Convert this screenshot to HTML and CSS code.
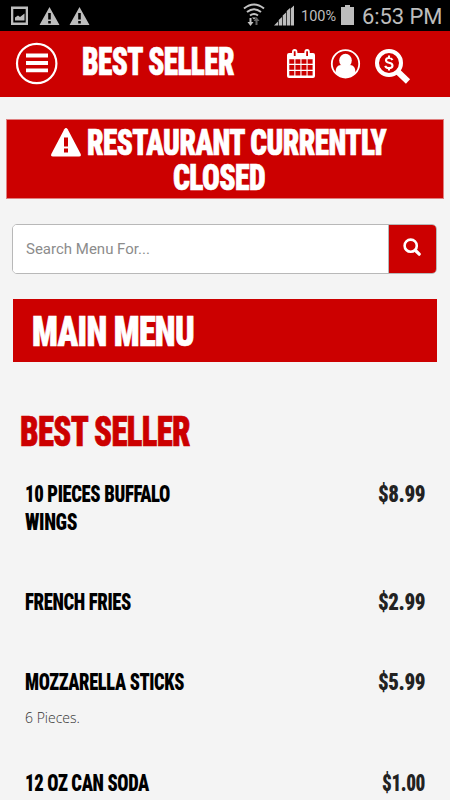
FILE: index.html
```html
<!DOCTYPE html>
<html lang="en">
<head>
    <meta charset="UTF-8">
    <meta name="viewport" content="width=device-width, initial-scale=1.0">
    <title>Best Seller</title>
    <link rel="stylesheet" href="styles.css">
</head>
<body>
    <!--status bar-->
    <div class="status">
        <svg class="notices" width="90" height="31" viewBox="0 0 90 31">
            <path fill="#bdbdbd" fill-rule="evenodd" d="M11 6.500h17v18.500H11zM13.300 9v13.500h12.400V9z"/>
            <path fill="#bdbdbd" d="M15 20.500v-3l3-2 2 1.500 4.500-3.500v7z"/>
            <path fill="#bdbdbd" d="M49.500 7l10 18h-20zM79.500 7l10 18h-20z"/>
            <path stroke="#000" stroke-width="2.600" d="M49.500 13v6.500m0 1.500v2.500M79.500 13v6.500m0 1.500v2.500"/>
        </svg>
        <svg class="signal" width="55" height="31" viewBox="0 0 55 31">
            <g fill="none" stroke="#c4c4c4" stroke-width="2">
                <path d="M1 8.500q10-8 20 0M4 12q7-5.500 14 0M7 15.500q4-3 8 0"/>
            </g>
            <path fill="#c4c4c4" d="M9 17.500h4l-2 2zM6.500 18h2v4h2l-3 4-3-4h2z"/>
            <path fill="#666" d="M12.500 25v-4h-2l3-4 3 4h-2v4z"/>
            <path fill="#bdbdbd" d="M31 25.500l4-4v4zM35.700 25.500v-5.500l3.300-3v8.500zM39.700 25.500v-10l3.300-3v13zM43.700 25.500v-14.500l3.300-3v17.500zM47.700 25.500V8.500l3.300-3v20z"/>
        </svg>
        <span class="percent">100%</span>
        <svg class="battery" width="13" height="31" viewBox="0 0 13 31"><path fill="#bdbdbd" d="M4 5h5v2h4v18H0V7h4z"/></svg>
        <span class="clock">6:53 PM</span>
    </div>

    <div class="navbar">
        <svg class="menu-icon" width="43" height="43" viewBox="0 0 43 43">
            <circle cx="21.700" cy="21.500" r="19.700" fill="none" stroke="#fff" stroke-width="2.200"/>
            <path stroke="#fff" stroke-width="3.800" d="M11 13.500h22M11 21h22M11 28.300h22"/>
        </svg>
        <h1 class="title">
            <svg width="156" height="40"><text x="0" y="34" textLength="152" lengthAdjust="spacingAndGlyphs">BEST SELLER</text></svg>
        </h1>
        <div class="nav-icons">
            <svg width="28" height="30" viewBox="0 0 28 30">
                <path fill="#fff" fill-rule="evenodd" d="M2 4h3V3q0-3 2.700-3T10.400 3v1h7V3q0-3 2.700-3t2.700 3v1H26q2 0 2 2v21q0 2-2 2H2q-2 0-2-2V6q0-2 2-2zM2.300 10.200v4.600h5v-4.600zM8.400 10.200v4.600h5v-4.600zM14.500 10.200v4.600h5v-4.600zM20.600 10.200v4.600h5v-4.600zM2.300 16v4.800h5v-4.800zM8.400 16v4.800h5v-4.800zM14.500 16v4.800h5v-4.800zM20.600 16v4.800h5v-4.800zM2.300 22v4.600h5V22zM8.400 22v4.600h5V22zM14.500 22v4.600h5V22zM20.600 22v4.600h5V22z"/>
                <path stroke="#c00" stroke-width="1.800" d="M7.700 2.300v4.700M20.100 2.300v4.700"/>
            </svg>
            <svg width="30" height="30" viewBox="0 0 30 30">
                <circle cx="15.500" cy="14.800" r="13.700" fill="none" stroke="#fff" stroke-width="1.800"/>
                <ellipse cx="15.500" cy="11.600" rx="6.300" ry="6.800" fill="#fff"/>
                <path fill="#fff" d="M5.500 23.500q0-7.500 5.500-7.500 4.500 3.500 9 0 5.500 0 5.500 7.500-4 5-10 5t-10-5z"/>
            </svg>
            <svg width="36" height="36" viewBox="0 0 36 36">
                <circle cx="14" cy="14" r="12" fill="none" stroke="#fff" stroke-width="4"/>
                <path stroke="#fff" stroke-width="6" d="M22 22l11 10.500"/>
                <path fill="none" stroke="#fff" stroke-width="2.100" d="M17.500 11q-1-2-3.500-2-3 0-3 2.300 0 2 3 2.500 3.500.6 3.500 2.900 0 2.300-3.500 2.300-3 0-3.800-2.200M14 6.500v2.500M14 19v2.500"/>
            </svg>
        </div>
    </div>

    <div class="alert">
        <div class="alert-row">
            <svg width="30" height="29" viewBox="0 0 30 29">
                <path fill="#fff" d="M13.300 1.200q1.700-2.200 3.400 0L29.700 26q.8 2.500-1.500 2.500H1.800Q-.5 28.500.3 26z"/>
                <path fill="#c00" d="M13 9.500h4v9h-4zM13 20.500h4v4h-4z"/>
            </svg>
            <svg width="302" height="34"><text x="1" y="27" textLength="299" lengthAdjust="spacingAndGlyphs">RESTAURANT CURRENTLY</text></svg>
        </div>
        <div class="alert-row">
            <svg width="94" height="34"><text x="1" y="27.500" textLength="92" lengthAdjust="spacingAndGlyphs">CLOSED</text></svg>
        </div>
    </div>

    <div class="search">
        <input type="text" placeholder="Search Menu For..." spellcheck="false">
        <button class="btn">
            <svg width="19" height="19" viewBox="0 0 19 19">
                <circle cx="7.700" cy="7.700" r="6.100" fill="none" stroke="#fff" stroke-width="2.600"/>
                <path stroke="#fff" stroke-width="3.200" stroke-linecap="round" d="M12.500 12.500l3.700 3.700"/>
            </svg>
        </button>
    </div>

    <h2 class="main-menu">
        <svg width="166" height="48"><text x="1" y="39.500" textLength="162" lengthAdjust="spacingAndGlyphs">MAIN MENU</text></svg>
    </h2>

    <h2 class="category">
        <svg width="174" height="48"><text x="1" y="38" textLength="170" lengthAdjust="spacingAndGlyphs">BEST SELLER</text></svg>
    </h2>

    <div class="items">
        <div class="item item-tall">
            <h3>
                <svg width="150" height="27"><text x="0" y="21" textLength="145" lengthAdjust="spacingAndGlyphs">10 PIECES BUFFALO</text></svg>
                <svg width="150" height="27"><text x="0" y="21.500" textLength="52" lengthAdjust="spacingAndGlyphs">WINGS</text></svg>
            </h3>
            <span class="price"><svg width="47" height="27"><text x="0" y="21" textLength="47" lengthAdjust="spacingAndGlyphs">$8.99</text></svg></span>
        </div>
        <div class="item">
            <h3><svg width="150" height="27"><text x="0" y="21" textLength="106" lengthAdjust="spacingAndGlyphs">FRENCH FRIES</text></svg></h3>
            <span class="price"><svg width="47" height="27"><text x="0" y="21" textLength="47" lengthAdjust="spacingAndGlyphs">$2.99</text></svg></span>
        </div>
        <div class="item item-note">
            <div>
                <h3><svg width="162" height="27"><text x="0" y="21" textLength="159" lengthAdjust="spacingAndGlyphs">MOZZARELLA STICKS</text></svg></h3>
                <p>6 Pieces.</p>
            </div>
            <span class="price"><svg width="47" height="27"><text x="0" y="21" textLength="47" lengthAdjust="spacingAndGlyphs">$5.99</text></svg></span>
        </div>
        <div class="item item-last">
            <h3><svg width="150" height="27"><text x="0" y="21" textLength="124" lengthAdjust="spacingAndGlyphs">12 OZ CAN SODA</text></svg></h3>
            <span class="price"><svg width="43" height="27"><text x="0" y="21" textLength="43" lengthAdjust="spacingAndGlyphs">$1.00</text></svg></span>
        </div>
    </div>
</body>
</html>
```

FILE: styles.css
```css
*{
    padding: 0;
    margin: 0;
    box-sizing: border-box;
}
body{
    background-color: #f4f4f4;
    font-family: Roboto, "Liberation Sans", sans-serif;
}
svg{
    display: block;
    flex: none;
    overflow: visible;
}
/* condensed heading type */
svg text{
    font-family: Roboto, sans-serif;
    font-weight: 900;
    font-stretch: 75%;
    letter-spacing: -0.02em;
    fill: currentColor;
}
.title text, .alert text, .main-menu text, .category text{
    stroke: currentColor;
    stroke-width: 0.7px;
}
.status{
    display: flex;
    height: 31px;
    background-color: black;
    color: #bdbdbd;
    line-height: 33px;
    white-space: nowrap;
}
.signal{
    margin-left: 153px;
}
.percent{
    width: 35px;
    margin-left: 3px;
    font-size: 14.500px;
}
.battery{
    margin-left: 5px;
}
.clock{
    margin-left: 8px;
    font-size: 22px;
    letter-spacing: -0.1px;
}
.navbar{
    display: flex;
    height: 66px;
    padding-left: 15px;
    background-color: #cc0000;
    color: white;
}
.menu-icon{
    margin-top: 11px;
}
.title{
    margin: 10px 0 0 24px;
}
.title text{
    font-size: 38px;
}
.nav-icons{
    display: flex;
    gap: 15px;
    margin: 18px 0 0 49px;
}
.alert{
    height: 80px;
    margin: 22px 6px 0 6px;
    padding: 8px 12px 0 0;
    border: 1px solid #df8080;
    background-color: #cc0000;
    color: white;
}
.alert-row{
    display: flex;
    justify-content: center;
    gap: 5px;
}
.alert text{
    font-size: 36.500px;
}
.search{
    display: flex;
    height: 50px;
    margin: 25px 13px 0 12px;
    border: 1px solid #b8b8b8;
    border-radius: 5px;
    overflow: hidden;
    background-color: white;
}
.search input{
    flex: 1;
    min-width: 0;
    padding-left: 13px;
    border: 0;
    outline: 0;
    font-family: Roboto, sans-serif;
    font-size: 15px;
}
.search input::placeholder{
    color: #8c8c8c;
}
.btn{
    width: 48px;
    padding: 0 0 3px 14px;
    border: 0;
    border-left: 1px solid #b8b8b8;
    background-color: #cc0000;
}
.main-menu{
    height: 63px;
    margin: 25px 13px 0 13px;
    padding: 7px 0 0 18px;
    background-color: #cc0000;
    color: white;
}
.main-menu text{
    font-size: 42.500px;
}
.category{
    margin: 46px 0 0 19px;
    color: #cc0000;
}
.category text{
    font-size: 42.500px;
}
.items{
    margin: 25px 25px 0 25px;
}
.item{
    display: flex;
    justify-content: space-between;
    height: 80px;
}
.item-tall{
    height: 108px;
}
.item-note{
    height: 101px;
}
.item-last{
    height: 30px;
}
.item text{
    font-size: 23px;
}
.price{
    color: #222;
}
.item p{
    margin-top: 12px;
    color: #333;
    font-family: "Open Sans", sans-serif;
    font-size: 14px;
    font-weight: 300;
    line-height: 20px;
}
```
